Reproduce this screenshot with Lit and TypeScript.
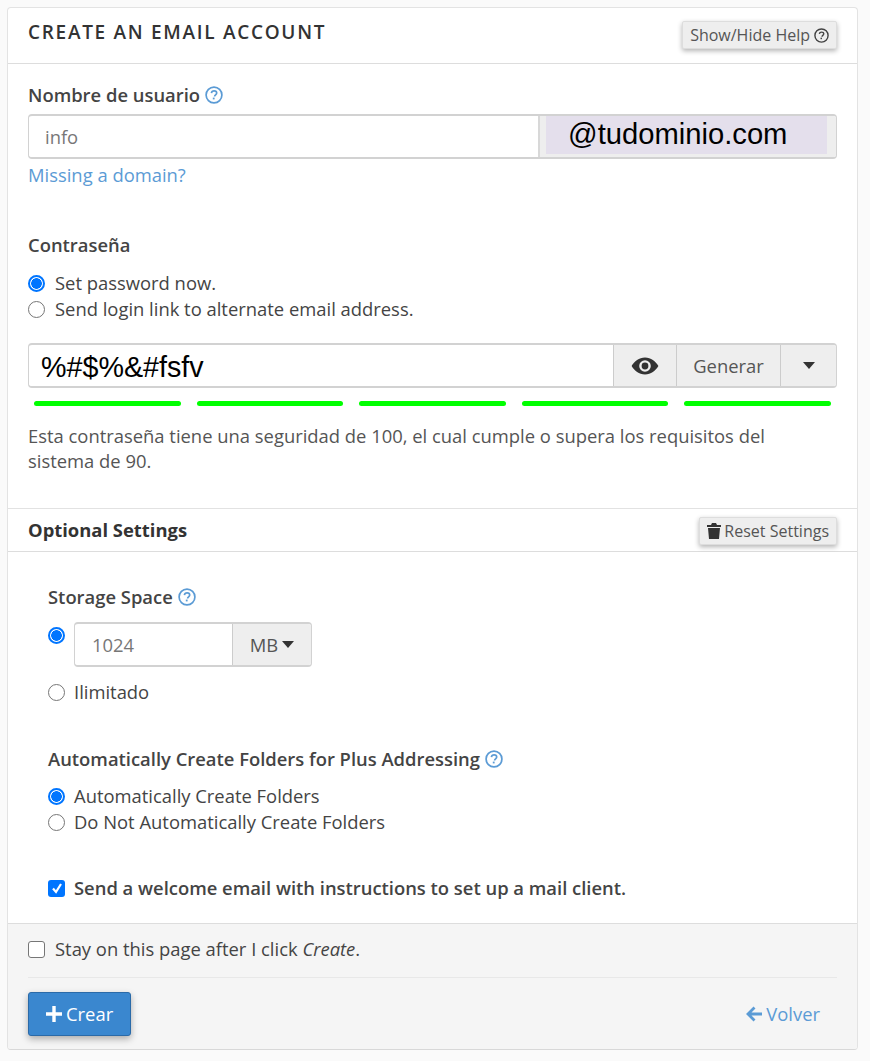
import { LitElement, css, html } from 'lit';
import { customElement } from 'lit/decorators.js';

const helpIcon = html`<svg class="help" viewBox="0 0 18 18" width="18" height="18">
  <circle cx="9" cy="9" r="7.9" fill="none" stroke="currentColor" stroke-width="1.7"></circle>
  <path d="M6.4 7.1c.2-1.5 1.3-2.2 2.7-2.2 1.5 0 2.6.9 2.6 2.1 0 1.9-2.1 1.8-2.1 3.5" fill="none" stroke="currentColor" stroke-width="1.7"></path>
  <rect x="7.8" y="11.6" width="1.8" height="1.8" fill="currentColor"></rect>
</svg>`;

const caret = html`<svg class="caret" viewBox="0 0 12 7" width="12" height="7"><path d="M0 0h12L6 7z" fill="currentColor"></path></svg>`;

const radio = (checked: boolean) => html`<span class="radio ${checked ? 'on' : ''}"></span>`;

@customElement('app-root')
export class AppRoot extends LitElement {
  static styles = css`
    :host {
      display: block;
      height: 1061px;
      box-sizing: border-box;
      padding: 7px 12px 0 7px;
      background: #fafafa;
      font-family: 'Open Sans', sans-serif;
      font-size: 18.4px;
      line-height: 26px;
      color: #444;
    }
    .card {
      height: 1043px;
      box-sizing: border-box;
      display: flex;
      flex-direction: column;
      background: #fff;
      border: 1px solid #e3e3e3;
      border-bottom-color: #d8d8d8;
      border-radius: 4px;
      overflow: hidden;
    }
    .head {
      height: 56px;
      flex: none;
      box-sizing: border-box;
      display: flex;
      justify-content: space-between;
      padding: 12px 20px 0;
      border-bottom: 1px solid #ddd;
    }
    h1 {
      margin: 0;
      font-size: 19px;
      line-height: 24px;
      font-weight: 600;
      letter-spacing: 1.7px;
      color: #333;
    }
    .btn-sm {
      display: flex;
      align-items: center;
      gap: 4px;
      height: 28px;
      box-sizing: border-box;
      padding: 0 7px;
      background: #eee;
      border: 1px solid #ddd;
      border-radius: 2px;
      box-shadow: 0 2px 5px rgba(0, 0, 0, 0.3);
      font-size: 16px;
      color: #555;
      white-space: nowrap;
    }
    .head .btn-sm { margin-top: 1px; }
    .btn-sm .help { width: 15px; height: 15px; color: #444; }
    .main { padding: 18px 20px 0; height: 444px; flex: none; box-sizing: border-box; }
    .label {
      display: flex;
      align-items: center;
      gap: 5px;
      font-weight: 600;
      color: #444;
    }
    .help { color: #5b9bd5; flex: none; }
    .group {
      display: flex;
      height: 45px;
      box-sizing: border-box;
      border: 1px solid #d2d2d2;
      border-top-width: 2px;
      border-bottom-width: 2px;
      border-radius: 4px;
      overflow: hidden;
    }
    .user { margin-top: 6px; }
    .user .field {
      width: 511px;
      box-sizing: border-box;
      flex: none;
      padding-left: 16px;
      line-height: 41px;
      color: #777;
      border-right: 2px solid #d8d8d8;
    }
    .domain {
      flex: 1;
      background: #eee;
      padding: 0 9px 0 6px;
      display: flex;
    }
    .domain span {
      flex: 1;
      margin-bottom: 3px;
      padding-left: 22px;
      background: #e4dfec;
      font-family: 'Liberation Sans', sans-serif;
      font-size: 29.2px;
      line-height: 37px;
      color: #000;
    }
    .link { color: #5b9bd5; margin-top: 3px; }
    .pw-label { margin-top: 44px; }
    .options { margin-top: 12px; display: flex; flex-direction: column; }
    .opt { display: flex; align-items: center; gap: 10px; white-space: nowrap; }
    .settings .opt { gap: 9px; }
    .radio {
      width: 17px;
      height: 17px;
      box-sizing: border-box;
      flex: none;
      border-radius: 50%;
      border: 1.5px solid #767676;
      background: #fff;
    }
    .radio.on {
      border: 2px solid #0075ff;
      background: radial-gradient(circle, #0075ff 0 5px, #fff 5.6px);
    }
    .pw { margin-top: 21px; }
    .pw .field {
      flex: 1;
      padding-left: 12px;
      font-family: 'Liberation Sans', sans-serif;
      font-size: 28.7px;
      line-height: 44px;
      color: #000;
    }
    .addon {
      display: flex;
      align-items: center;
      justify-content: center;
      flex: none;
      background: #eee;
      border-left: 1px solid #ccc;
      color: #555;
      box-sizing: border-box;
    }
    .addon.eye { width: 63px; color: #333; }
    .addon.gen { width: 104px; }
    .addon.drop { width: 56px; color: #333; }
    .bars { display: flex; gap: 16px; padding: 0 6px; margin-top: 13px; }
    .bars i { flex: 1; height: 5px; border-radius: 3px; background: #0f0; }
    .note { margin: 17px 0 0; max-width: 780px; line-height: 25px; color: #555; }
    .sub-head {
      height: 44px;
      flex: none;
      box-sizing: border-box;
      display: flex;
      align-items: center;
      justify-content: space-between;
      padding: 0 20px;
      border-top: 1px solid #e2e2e2;
      border-bottom: 1px solid #ddd;
    }
    .sub-head strong { font-weight: 700; color: #333; }
    .sub-head .btn-sm { margin-top: 1px; }
    .sub-head .btn-sm svg { flex: none; margin-right: -1px; }
    .settings { flex: 1; padding: 32px 20px 0 40px; }
    .quota { display: flex; gap: 9px; margin-top: 12px; }
    .quota .radio { margin-top: 5px; }
    .quota .group { width: 238px; }
    .quota .field { width: 157px; box-sizing: border-box; padding-left: 17px; line-height: 41px; color: #777; }
    .quota .addon { flex: 1; gap: 4px; color: #555; }
    .quota .caret { color: #333; }
    .unlimited { margin-top: 12px; }
    .plus { margin-top: 41px; }
    .plus + .options { margin-top: 11px; }
    .welcome { margin-top: 40px; display: flex; align-items: center; gap: 9px; font-weight: 600; color: #444; white-space: nowrap; }
    .check {
      width: 17px;
      height: 17px;
      flex: none;
      box-sizing: border-box;
      border-radius: 3px;
      border: 1.5px solid #767676;
      background: #fff;
    }
    .check.on { border: 0; background: #0075ff; display: flex; align-items: center; justify-content: center; }
    .foot {
      flex: none;
      height: 126px;
      box-sizing: border-box;
      padding: 12px 20px 0;
      background: #f5f5f5;
      border-top: 1px solid #ddd;
    }
    .stay { display: flex; align-items: center; gap: 10px; padding-bottom: 15px; border-bottom: 1px solid #e8e8e8; }
    .actions { display: flex; justify-content: space-between; align-items: center; margin-top: 14px; }
    .create {
      display: flex;
      align-items: center;
      gap: 4px;
      height: 44px;
      box-sizing: border-box;
      width: 103px;
      padding-left: 17px;
      background: #3a87cf;
      border: 1px solid #2a6aa8;
      border-radius: 3px;
      box-shadow: 0 3px 7px rgba(0, 0, 0, 0.3);
      color: #fff;
    }
    .back { display: flex; align-items: center; gap: 4px; padding-right: 17px; color: #5b9bd5; }
  `;

  render() {
    return html`
      <div class="card">
        <div class="head">
          <h1>CREATE AN EMAIL ACCOUNT</h1>
          <div class="btn-sm">Show/Hide Help ${helpIcon}</div>
        </div>
        <div class="main">
          <div class="label">Nombre de usuario ${helpIcon}</div>
          <div class="group user">
            <div class="field">info</div>
            <div class="domain"><span>@tudominio.com</span></div>
          </div>
          <div class="link">Missing a domain?</div>
          <div class="label pw-label">Contraseña</div>
          <div class="options">
            <div class="opt">${radio(true)} Set password now.</div>
            <div class="opt">${radio(false)} Send login link to alternate email address.</div>
          </div>
          <div class="group pw">
            <div class="field">%#$%&#fsfv</div>
            <div class="addon eye">
              <svg viewBox="0 0 28 20" width="28" height="20">
                <path fill-rule="evenodd" fill="currentColor" d="M14 1.5C8 1.5 3.4 5.5.6 10c2.8 4.5 7.4 8.5 13.4 8.5S24.600 14.500 27.400 10C24.600 5.500 20 1.500 14 1.500zM14 4.200a5.800 5.800 0 1 1 0 11.600 5.800 5.800 0 0 1 0-11.600z"></path>
                <circle cx="14" cy="10" r="3.400" fill="currentColor"></circle>
              </svg>
            </div>
            <div class="addon gen">Generar</div>
            <div class="addon drop">${caret}</div>
          </div>
          <div class="bars"><i></i><i></i><i></i><i></i><i></i></div>
          <p class="note">Esta contraseña tiene una seguridad de 100, el cual cumple o supera los requisitos del sistema de 90.</p>
        </div>
        <div class="sub-head">
          <strong>Optional Settings</strong>
          <div class="btn-sm">
            <svg viewBox="0 0 14 16" width="14" height="16"><path fill="#333" d="M5 0h4l1 2h4v2H0V2h4zM1 5h12l-1 11H2z"></path></svg>
            Reset Settings
          </div>
        </div>
        <div class="settings">
          <div class="label">Storage Space ${helpIcon}</div>
          <div class="quota">
            ${radio(true)}
            <div class="group">
              <div class="field">1024</div>
              <div class="addon">MB ${caret}</div>
            </div>
          </div>
          <div class="opt unlimited">${radio(false)} Ilimitado</div>
          <div class="label plus">Automatically Create Folders for Plus Addressing ${helpIcon}</div>
          <div class="options">
            <div class="opt">${radio(true)} Automatically Create Folders</div>
            <div class="opt">${radio(false)} Do Not Automatically Create Folders</div>
          </div>
          <div class="welcome">
            <span class="check on">
              <svg viewBox="0 0 14 14" width="14" height="14"><path d="M3 7.500l3 3.500 5-8" fill="none" stroke="#fff" stroke-width="2.200"></path></svg>
            </span>
            Send a welcome email with instructions to set up a mail client.
          </div>
        </div>
        <div class="foot">
          <div class="stay"><span class="check"></span><span>Stay on this page after I click <em>Create</em>.</span></div>
          <div class="actions">
            <div class="create">
              <svg viewBox="0 0 16 16" width="16" height="16"><path fill="#fff" d="M6.300 0h3.400v6.300H16v3.400H9.700V16H6.300V9.700H0V6.300h6.300z"></path></svg>
              Crear
            </div>
            <div class="back">
              <svg viewBox="0 0 16 16" width="16" height="16"><path fill="none" stroke="currentColor" stroke-width="2.800" d="M8.500 1.500 2 8l6.500 6.500M2.500 8H16"></path></svg>
              Volver
            </div>
          </div>
        </div>
      </div>
    `;
  }
}
